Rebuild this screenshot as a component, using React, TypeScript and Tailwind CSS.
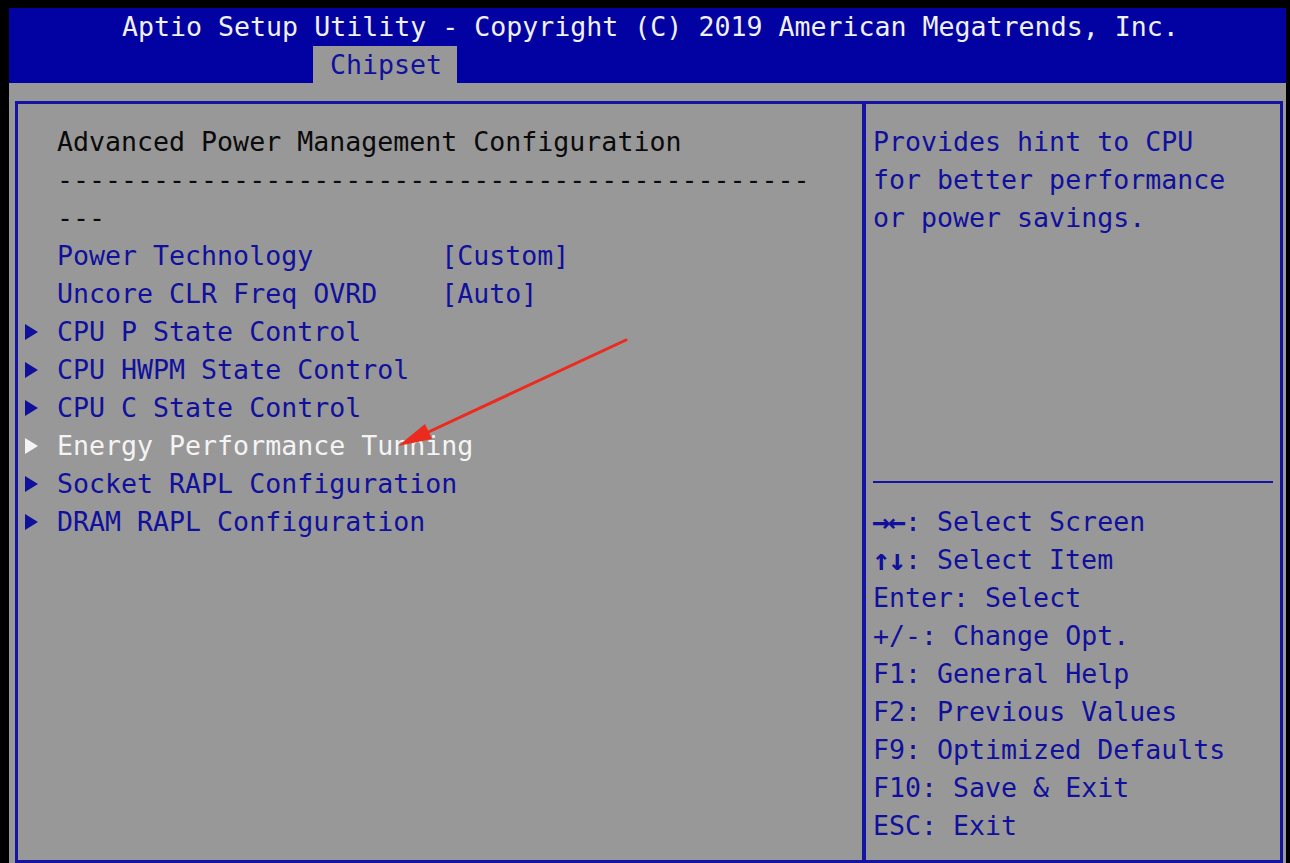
const items = [
  { label: 'CPU P State Control', active: false },
  { label: 'CPU HWPM State Control', active: false },
  { label: 'CPU C State Control', active: false },
  { label: 'Energy Performance Tunning', active: true },
  { label: 'Socket RAPL Configuration', active: false },
  { label: 'DRAM RAPL Configuration', active: false },
];

const keys = [
  '→←: Select Screen',
  '↑↓: Select Item',
  'Enter: Select',
  '+/-: Change Opt.',
  'F1: General Help',
  'F2: Previous Values',
  'F9: Optimized Defaults',
  'F10: Save & Exit',
  'ESC: Exit',
];

function Tri({ white }: { white?: boolean }) {
  return (
    <svg width="13" height="16" viewBox="0 0 13 16" className="block">
      <polygon points="0,0 13,8 0,16" fill={white ? '#f4f4f4' : '#10109c'} />
    </svg>
  );
}

function Row({ children, className = '' }: { children: React.ReactNode; className?: string }) {
  return <div className={`flex h-[38px] items-center whitespace-pre ${className}`}>{children}</div>;
}

export default function App() {
  return (
    <div className="relative h-[863px] w-[1290px] overflow-hidden bg-black font-['DejaVu_Sans_Mono','Liberation_Mono',monospace] text-[26.6px] leading-[38px]">
      <div className="ml-[9px] mt-[8px] flex h-[855px] w-[1277px] flex-col">
        {/* header */}
        <div className="flex h-[75px] flex-col bg-[#0202a2]">
          <div className="h-[38px] whitespace-pre pl-[113px] text-[#f0f0f0]">
            Aptio Setup Utility - Copyright (C) 2019 American Megatrends, Inc.
          </div>
          <div className="flex h-[37px] pl-[304px]">
            <div className="h-[37px] w-[144px] bg-[#989898] pl-[17px] leading-[37px] text-[#10109c]">Chipset</div>
          </div>
        </div>

        {/* body */}
        <div className="flex-1 bg-[#989898] pl-[6px] pr-[3px] pt-[18px]">
          <div className="flex h-full border-[3px] border-[#1414a2]">
            {/* left */}
            <div className="w-[844px] pt-[19px]">
              <Row className="pl-[39px] text-[#0a0a0a]">Advanced Power Management Configuration</Row>
              <Row className="pl-[39px] text-[#0a0a0a]">-----------------------------------------------</Row>
              <Row className="pl-[39px] text-[#0a0a0a]">---</Row>
              <Row className="pl-[39px] text-[#10109c]">Power Technology        [Custom]</Row>
              <Row className="pl-[39px] text-[#10109c]">Uncore CLR Freq OVRD    [Auto]</Row>
              {items.map((it) => (
                <Row key={it.label}>
                  <div className="flex w-[39px] pl-[7px]">
                    <Tri white={it.active} />
                  </div>
                  <span className={it.active ? 'text-[#f4f4f4]' : 'text-[#10109c]'}>{it.label}</span>
                </Row>
              ))}
            </div>

            <div className="w-[4px] bg-[#1414a2]" />

            {/* right */}
            <div className="flex-1 px-[7px] pt-[19px] text-[#10109c]">
              <div className="h-[358px]">
                <Row>Provides hint to CPU</Row>
                <Row>for better performance</Row>
                <Row>or power savings.</Row>
              </div>
              <div className="h-[2px] bg-[#1414a2]" />
              <div className="mt-[20px]">
                {keys.map((k) => {
                  const i = k.indexOf(':');
                  const key = k.slice(0, i);
                  const arrow = key.includes('→') || key.includes('↑');
                  return (
                    <Row key={k}>
                      {arrow ? (
                        Array.from(key).map((g) => (
                          <span key={g} className="inline-flex w-[16px] justify-center text-[30px] font-bold">
                            {g}
                          </span>
                        ))
                      ) : (
                        <span>{key}</span>
                      )}
                      {k.slice(i)}
                    </Row>
                  );
                })}
              </div>
            </div>
          </div>
        </div>
      </div>

      {/* red annotation arrow */}
      <svg className="pointer-events-none absolute left-0 top-0" width="1290" height="863">
        <line x1="626" y1="340" x2="422" y2="435" stroke="#ec2a1e" strokeWidth="3" strokeLinecap="round" />
        <polygon points="398,446 425,424 432,439" fill="#ec2a1e" />
      </svg>
    </div>
  );
}
